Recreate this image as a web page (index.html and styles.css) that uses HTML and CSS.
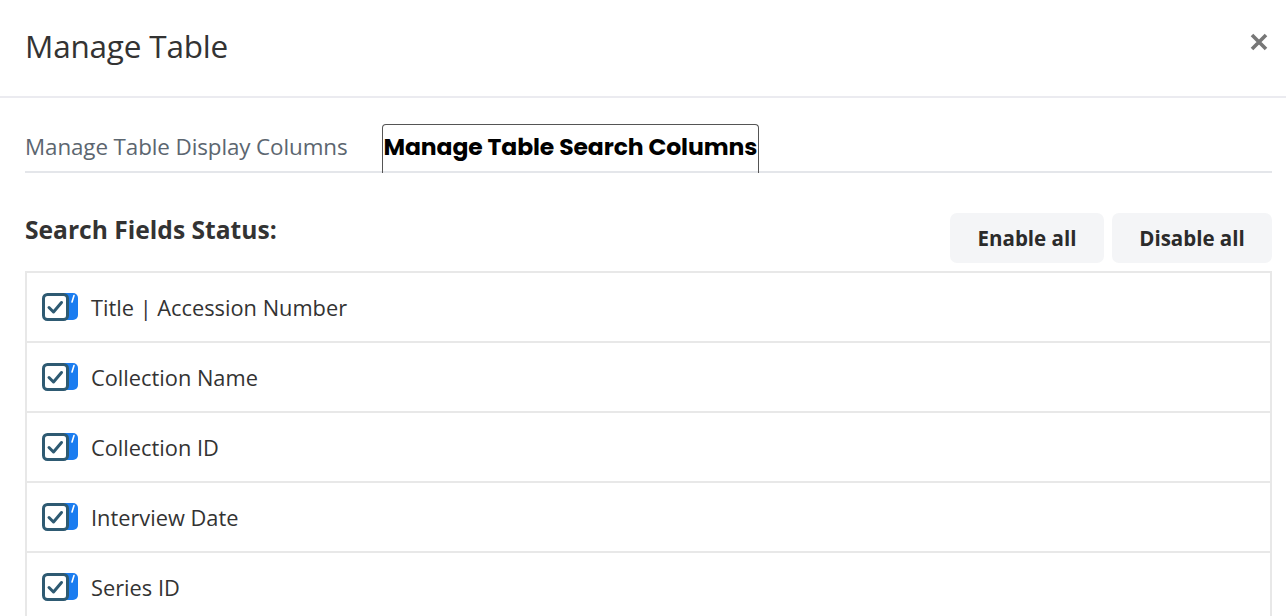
FILE: index.html
```html
<!DOCTYPE html>
<html lang="en">
<head>
    <meta charset="UTF-8">
    <meta name="viewport" content="width=device-width, initial-scale=1.0">
    <title>Manage Table</title>
    <link rel="stylesheet" href="styles.css">
</head>
<body>
    <div class="modal">
        <div class="modal-header">
            <h1>Manage Table</h1>
            <svg class="close" width="18" height="18" viewBox="0 0 18 18">
                <path d="M2 2 L16 16 M16 2 L2 16" stroke="#777" stroke-width="3.6" stroke-linecap="butt"/>
            </svg>
        </div>
        <div class="modal-body">
            <div class="tabs">
                <div class="tab">Manage Table Display Columns</div>
                <div class="tab active">Manage Table Search Columns</div>
            </div>
            <div class="status-row">
                <h2>Search Fields Status:</h2>
                <div class="actions">
                    <button class="action-btn">Enable all</button>
                    <button class="action-btn wide">Disable all</button>
                </div>
            </div>
            <ul class="field-list">
                <li>
                    <svg class="check" width="37" height="29" viewBox="0 0 37 29">
                        <rect x="9" y="0" width="27" height="27" rx="5" fill="#1a7cf0"/>
                        <path d="M32 2.5 L30 9" stroke="#fff" stroke-width="1.6" stroke-linecap="round"/>
                        <rect x="1.5" y="1.5" width="24" height="25" rx="4" fill="#fff" stroke="#2e5a72" stroke-width="3"/>
                        <path d="M7 14.5 L11.5 19 L19.5 9.5" fill="none" stroke="#2e5a72" stroke-width="3" stroke-linecap="round" stroke-linejoin="round"/>
                    </svg>
                    Title | Accession Number
                </li>
                <li>
                    <svg class="check" width="37" height="29" viewBox="0 0 37 29">
                        <rect x="9" y="0" width="27" height="27" rx="5" fill="#1a7cf0"/>
                        <path d="M32 2.5 L30 9" stroke="#fff" stroke-width="1.6" stroke-linecap="round"/>
                        <rect x="1.5" y="1.5" width="24" height="25" rx="4" fill="#fff" stroke="#2e5a72" stroke-width="3"/>
                        <path d="M7 14.5 L11.5 19 L19.5 9.5" fill="none" stroke="#2e5a72" stroke-width="3" stroke-linecap="round" stroke-linejoin="round"/>
                    </svg>
                    Collection Name
                </li>
                <li>
                    <svg class="check" width="37" height="29" viewBox="0 0 37 29">
                        <rect x="9" y="0" width="27" height="27" rx="5" fill="#1a7cf0"/>
                        <path d="M32 2.5 L30 9" stroke="#fff" stroke-width="1.6" stroke-linecap="round"/>
                        <rect x="1.5" y="1.5" width="24" height="25" rx="4" fill="#fff" stroke="#2e5a72" stroke-width="3"/>
                        <path d="M7 14.5 L11.5 19 L19.5 9.5" fill="none" stroke="#2e5a72" stroke-width="3" stroke-linecap="round" stroke-linejoin="round"/>
                    </svg>
                    Collection ID
                </li>
                <li>
                    <svg class="check" width="37" height="29" viewBox="0 0 37 29">
                        <rect x="9" y="0" width="27" height="27" rx="5" fill="#1a7cf0"/>
                        <path d="M32 2.5 L30 9" stroke="#fff" stroke-width="1.6" stroke-linecap="round"/>
                        <rect x="1.5" y="1.5" width="24" height="25" rx="4" fill="#fff" stroke="#2e5a72" stroke-width="3"/>
                        <path d="M7 14.5 L11.5 19 L19.5 9.5" fill="none" stroke="#2e5a72" stroke-width="3" stroke-linecap="round" stroke-linejoin="round"/>
                    </svg>
                    Interview Date
                </li>
                <li>
                    <svg class="check" width="37" height="29" viewBox="0 0 37 29">
                        <rect x="9" y="0" width="27" height="27" rx="5" fill="#1a7cf0"/>
                        <path d="M32 2.5 L30 9" stroke="#fff" stroke-width="1.6" stroke-linecap="round"/>
                        <rect x="1.5" y="1.5" width="24" height="25" rx="4" fill="#fff" stroke="#2e5a72" stroke-width="3"/>
                        <path d="M7 14.5 L11.5 19 L19.5 9.5" fill="none" stroke="#2e5a72" stroke-width="3" stroke-linecap="round" stroke-linejoin="round"/>
                    </svg>
                    Series ID
                </li>
            </ul>
        </div>
    </div>
</body>
</html>
```

FILE: styles.css
```css
body {
    margin: 0;
    font-family: "Open Sans", Arial, sans-serif;
    background-color: #fff;
    color: #333;
    overflow: hidden;
}
.modal {
    width: 1286px;
}
.modal-header {
    display: flex;
    justify-content: space-between;
    align-items: center;
    height: 98px;
    padding: 0 18px 6px 25px;
    border-bottom: 2px solid #ebebf0;
    box-sizing: border-box;
}
.modal-header h1 {
    margin: 0;
    font-size: 31.5px;
    font-weight: 400;
    color: #333;
    letter-spacing: -0.2px;
}
.close {
    display: block;
    margin-top: -6px;
}
.modal-body {
    padding: 0 14px 0 25px;
}
.tabs {
    display: flex;
    align-items: flex-end;
    margin-top: 24px;
    border-bottom: 2px solid #e4e6ea;
    height: 49px;
}
.tab {
    font-size: 22.4px;
    color: #5c6670;
    padding: 0 0 9px 0;
    margin-right: 34px;
    letter-spacing: -0.1px;
}
.tab.active {
    font-family: "Poppins", "Montserrat", Lato, sans-serif;
    font-weight: 700;
    font-size: 23.5px;
    color: #000;
    border: 1px solid #555;
    border-bottom: none;
    border-radius: 4px 4px 0 0;
    padding: 4px 1px 10px 1px;
    margin-bottom: -2px;
    height: 49px;
    box-sizing: border-box;
    letter-spacing: -0.1px;
}
.status-row {
    display: flex;
    justify-content: space-between;
    align-items: flex-start;
    margin-top: 40px;
}
.status-row h2 {
    margin: 0;
    font-size: 24.6px;
    font-weight: 700;
    color: #333;
}
.actions {
    display: flex;
    gap: 8px;
}
.action-btn {
    font-family: "Open Sans", Arial, sans-serif;
    font-size: 20.5px;
    font-weight: 700;
    color: #2b2b2b;
    background-color: #f4f5f7;
    border: none;
    border-radius: 7px;
    width: 154px;
    height: 50px;
    padding: 0;
}
.action-btn.wide {
    width: 160px;
}
.field-list {
    list-style: none;
    margin: 8px 0 0 0;
    padding: 0;
    border: 2px solid #e8e8e8;
    border-bottom: none;
}
.field-list li {
    display: flex;
    align-items: center;
    height: 70px;
    padding-left: 15px;
    border-bottom: 2px solid #e8e8e8;
    box-sizing: border-box;
    font-size: 21.8px;
    color: #333;
}
.check {
    margin-right: 12px;
    flex-shrink: 0;
}
```
